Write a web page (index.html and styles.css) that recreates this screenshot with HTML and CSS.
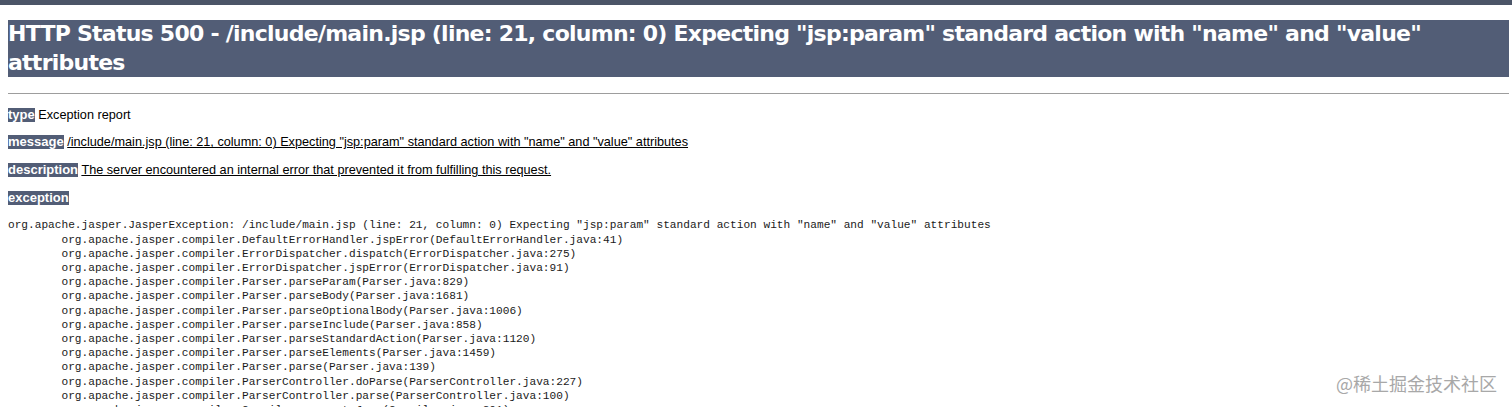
FILE: index.html
```html
<!DOCTYPE html>
<html>
<head>
<meta charset="utf-8">
<title>Apache Tomcat - Error report</title>
<link rel="stylesheet" href="styles.css">
</head>
<body>
<div class="topbar"></div>
<div class="page">
<h1 class="title">HTTP Status 500 - /include/main.jsp (line: 21, column: 0) Expecting "jsp:param" standard action with "name" and "value" attributes</h1>
<hr class="rule">
<p class="row"><b class="label">type</b> Exception report</p>
<p class="row"><b class="label">message</b> <u>/include/main.jsp (line: 21, column: 0) Expecting "jsp:param" standard action with "name" and "value" attributes</u></p>
<p class="row"><b class="label">description</b> <u>The server encountered an internal error that prevented it from fulfilling this request.</u></p>
<p class="row"><b class="label">exception</b></p>
<pre class="trace">org.apache.jasper.JasperException: /include/main.jsp (line: 21, column: 0) Expecting "jsp:param" standard action with "name" and "value" attributes
	org.apache.jasper.compiler.DefaultErrorHandler.jspError(DefaultErrorHandler.java:41)
	org.apache.jasper.compiler.ErrorDispatcher.dispatch(ErrorDispatcher.java:275)
	org.apache.jasper.compiler.ErrorDispatcher.jspError(ErrorDispatcher.java:91)
	org.apache.jasper.compiler.Parser.parseParam(Parser.java:829)
	org.apache.jasper.compiler.Parser.parseBody(Parser.java:1681)
	org.apache.jasper.compiler.Parser.parseOptionalBody(Parser.java:1006)
	org.apache.jasper.compiler.Parser.parseInclude(Parser.java:858)
	org.apache.jasper.compiler.Parser.parseStandardAction(Parser.java:1120)
	org.apache.jasper.compiler.Parser.parseElements(Parser.java:1459)
	org.apache.jasper.compiler.Parser.parse(Parser.java:139)
	org.apache.jasper.compiler.ParserController.doParse(ParserController.java:227)
	org.apache.jasper.compiler.ParserController.parse(ParserController.java:100)
	org.apache.jasper.compiler.Compiler.generateJava(Compiler.java:201)</pre>
</div>
<div class="watermark">@稀土掘金技术社区</div>
</body>
</html>
```
FILE: styles.css
```css
html, body {
  margin: 0;
  padding: 0;
  background: #fff;
  overflow: hidden;
}
body {
  font-family: "Liberation Sans", Arial, sans-serif;
  color: #000;
  height: 407px;
  position: relative;
}
.topbar {
  height: 5px;
  background: #4b5567;
}
.page {
  padding: 0 3px 0 8px;
}
.title {
  margin: 15px 0 0 0;
  background: #525D76;
  color: #fff;
  font-family: "DejaVu Sans", Verdana, sans-serif;
  font-weight: bold;
  font-size: 22px;
  letter-spacing: -0.75px;
  line-height: 28.5px;
}
.rule {
  margin: 16px 0 0 0;
  border: 0;
  border-top: 1px solid #9d9d9d;
  height: 0;
}
.row {
  margin: 13.7px 0;
  font-size: 12.7px;
  line-height: 14px;
}
.label {
  display: inline-block;
  background: #525D76;
  color: #fff;
  font-weight: bold;
  font-size: 13px;
  line-height: 14px;
}
.trace {
  margin: 13px 0 0 0;
  font-family: "Liberation Mono", "Courier New", monospace;
  font-size: 11.15px;
  line-height: 14.2px;
  color: #1a1a1a;
  tab-size: 8;
}
.watermark {
  position: absolute;
  right: 15px;
  top: 372px;
  font-family: "Noto Sans CJK SC", sans-serif;
  font-size: 18px;
  line-height: 22px;
  color: #a8a8a8;
}
```
